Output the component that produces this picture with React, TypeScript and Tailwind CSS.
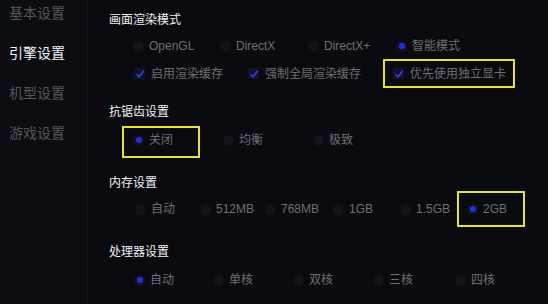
import React from "react";

const font = { fontFamily: '"Liberation Sans", "Noto Sans CJK SC", sans-serif' };

function Radio({ checked }: { checked?: boolean }) {
  return (
    <span className="w-[11px] h-[11px] rounded-full bg-[#13131c] flex items-center justify-center shrink-0">
      {checked && <span className="w-[6px] h-[6px] rounded-full bg-[#1a33e6]" />}
    </span>
  );
}

function Check() {
  return (
    <span className="w-[11px] h-[11px] bg-[#121228] flex items-center justify-center shrink-0">
      <svg width="10" height="10" viewBox="0 0 10 10">
        <path d="M1.5 5.2 L4 7.8 L8.8 1.8" fill="none" stroke="#2d45e8" strokeWidth="1.6" />
      </svg>
    </span>
  );
}

function RadioItem({ label, checked, w }: { label: string; checked?: boolean; w: string }) {
  return (
    <div className={`flex items-center gap-[5px] h-[20px] shrink-0 ${w}`}>
      <Radio checked={checked} />
      <span className="text-[12px] text-[#6f6f76] leading-none">{label}</span>
    </div>
  );
}

function CheckItem({ label, w }: { label: string; w: string }) {
  return (
    <div className={`flex items-center gap-[6px] h-[20px] shrink-0 ${w}`}>
      <Check />
      <span className="text-[12px] text-[#6f6f76] leading-none">{label}</span>
    </div>
  );
}

function Header({ children, mt }: { children: React.ReactNode; mt: string }) {
  return (
    <div className={`h-[16px] flex items-center text-[12px] text-[#f2f2f2] leading-none ${mt}`}>{children}</div>
  );
}

export default function App() {
  return (
    <div className="w-[548px] h-[304px] flex bg-[#0a0a10] overflow-hidden" style={font}>
      <div className="w-[88px] h-full bg-[#0c0c13] border-r border-[#14141c] flex flex-col pt-[3px] gap-[20px] pl-[9px]">
        <div className="h-[20px] flex items-center text-[14px] text-[#56565d]">基本设置</div>
        <div className="h-[20px] flex items-center text-[14px] text-[#f4f4f4]">引擎设置</div>
        <div className="h-[20px] flex items-center text-[14px] text-[#56565d]">机型设置</div>
        <div className="h-[20px] flex items-center text-[14px] text-[#56565d]">游戏设置</div>
      </div>
      <div className="flex-1 flex flex-col pl-[21px]">
        <Header mt="mt-[12px]">画面渲染模式</Header>
        <div className="flex mt-[8px] pl-[24px]">
          <RadioItem label="OpenGL" w="w-[87px]" />
          <RadioItem label="DirectX" w="w-[88px]" />
          <RadioItem label="DirectX+" w="w-[88px]" />
          <RadioItem label="智能模式" checked w="w-[90px]" />
        </div>
        <div className="flex items-center h-[29px] mt-[3px] pl-[25px]">
          <CheckItem label="启用渲染缓存" w="w-[114px]" />
          <CheckItem label="强制全局渲染缓存" w="w-[135px]" />
          <div className="w-[132px] h-[29px] border-2 border-[#e5e332] flex items-center pl-[8px]">
            <CheckItem label="优先使用独立显卡" w="w-auto" />
          </div>
        </div>
        <Header mt="mt-[16px]">抗锯齿设置</Header>
        <div className="flex items-start h-[32px] mt-[6px] pl-[13px]">
          <div className="w-[78px] h-[32px] border-2 border-[#e5e332] flex items-center pl-[9px] pb-[4px]">
            <RadioItem label="关闭" checked w="w-auto" />
          </div>
          <div className="mt-[4px] ml-[23px] flex">
            <RadioItem label="均衡" w="w-[90px]" />
            <RadioItem label="极致" w="w-[80px]" />
          </div>
        </div>
        <Header mt="mt-[17px]">内存设置</Header>
        <div className="flex items-center h-[36px] pl-[26px]">
          <RadioItem label="自动" w="w-[65px]" />
          <RadioItem label="512MB" w="w-[65px]" />
          <RadioItem label="768MB" w="w-[68px]" />
          <RadioItem label="1GB" w="w-[67px]" />
          <RadioItem label="1.5GB" w="w-[57px]" />
          <div className="w-[68px] h-[36px] border-2 border-[#e5e332] flex items-center pl-[8px]">
            <RadioItem label="2GB" checked w="w-auto" />
          </div>
        </div>
        <Header mt="mt-[17px]">处理器设置</Header>
        <div className="flex mt-[10px] pl-[25px]">
          <RadioItem label="自动" checked w="w-[79px]" />
          <RadioItem label="单核" w="w-[80px]" />
          <RadioItem label="双核" w="w-[80px]" />
          <RadioItem label="三核" w="w-[82px]" />
          <RadioItem label="四核" w="w-[70px]" />
        </div>
      </div>
    </div>
  );
}
